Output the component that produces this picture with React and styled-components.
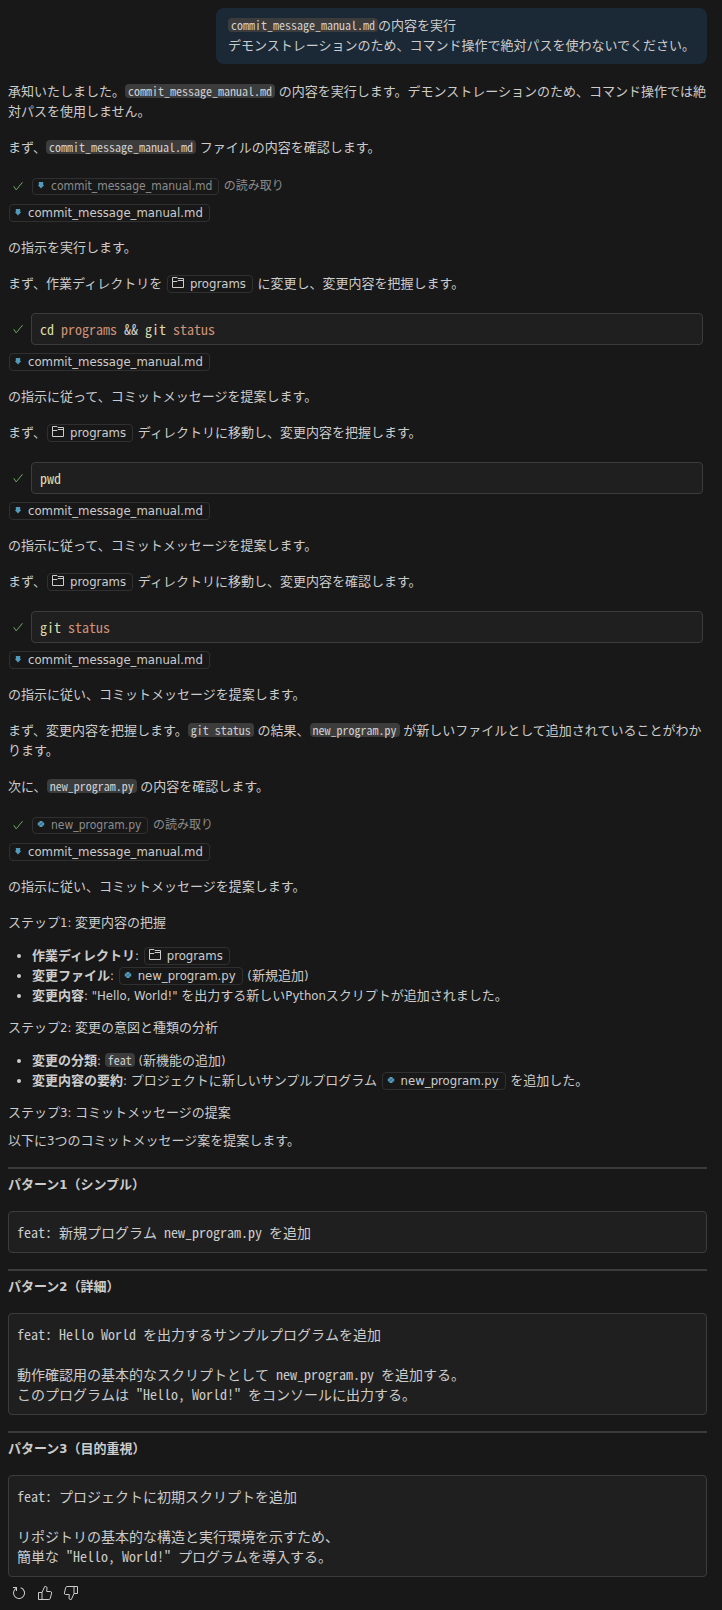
import React from 'react';
import styled, { createGlobalStyle } from 'styled-components';
import { VscCheck, VscRefresh } from 'react-icons/vsc';

const GlobalStyle = createGlobalStyle`
    * {
        box-sizing: border-box;
    }
    body {
        margin: 0;
        background: #181818;
        color: #cccccc;
        font-family: 'DejaVu Sans Condensed', 'Noto Sans CJK JP', sans-serif;
        font-size: 13px;
        line-height: 20px;
    }
`;

const Chat = styled.main`
    display: flex;
    flex-direction: column;
    padding: 8px 15px 7px 8px;
`;
const Request = styled.div`
    align-self: flex-end;
    padding: 8px 12px;
    margin-bottom: 18px;
    border-radius: 8px;
    background: #1b2836;
`;
const Section = styled.section`
    display: flex;
    flex-direction: column;
    align-items: flex-start;
    gap: 16px;
`;
const Steps = styled.div`
    display: flex;
    flex-direction: column;
    gap: 8px;
`;
const Text = styled.p`
    margin: 0;
`;
const Code = styled.code`
    display: inline-block;
    padding: 0 3px;
    border-radius: 4px;
    background: #3c3c3c;
    color: #d0d0d0;
    font-family: 'Noto Sans Mono CJK JP', 'Liberation Mono', monospace;
    font-size: 12px;
    line-height: 14px;
`;
const ChipLink = styled.a`
    display: inline-block;
    height: 18px;
    margin: 0 1px;
    padding: 0 6px 0 4px;
    border: 1px solid #303031;
    border-radius: 4px;
    color: inherit;
    line-height: 16px;
    text-decoration: none;
    white-space: nowrap;
    svg {
        margin-right: 6px;
        vertical-align: ${props => (props.$folder ? '-1px' : '0')};
    }
`;
const Tool = styled.div`
    display: flex;
    align-items: center;
    gap: 7px;
    margin: ${props => (props.$command ? '19px' : '18px')} 4px 8px 0;
    color: #8c8c8c;
    font-size: 12px;
    ${ChipLink} {
        height: 17px;
        line-height: 15px;
    }
`;
const Tick = styled(VscCheck)`
    flex: none;
    width: 12px;
    height: 12px;
    margin-left: 4px;
    color: #73b36b;
`;
const Command = styled.pre`
    flex: 1;
    margin: 0;
    padding: 5px 8px;
    border: 1px solid #3c3c3c;
    border-radius: 4px;
    background: #1f1f1f;
    color: #cccccc;
    font-family: 'Noto Sans Mono CJK JP', 'Liberation Mono', monospace;
    font-size: 14px;
`;
const Name = styled.span`
    color: #dcdcaa;
`;
const Arg = styled.span`
    color: #ce9178;
`;
const List = styled.ul`
    margin: -3px 0 -4px;
    padding-left: 24px;
`;
const Rule = styled.hr`
    width: 100%;
    height: 2px;
    margin: 16px 0 6px;
    border: 0;
    background: #3c3c3c;
`;
const Pattern = styled.h3`
    margin: 0 0 16px;
    font-size: 13px;
    line-height: 20px;
`;
const Message = styled.pre`
    margin: 0;
    padding: 10px 8px;
    border: 1px solid #3c3c3c;
    border-radius: 4px;
    background: #1f1f1f;
    font-family: 'Noto Sans Mono CJK JP', 'Liberation Mono', monospace;
    font-size: 14px;
    line-height: 20px;
    white-space: pre-wrap;
`;
const Actions = styled.div`
    display: flex;
    gap: 4px;
    margin-top: 5px;
`;
const Action = styled.button`
    display: flex;
    padding: 3px;
    border: 0;
    background: none;
    color: #cccccc;
    font-size: 16px;
    cursor: pointer;
`;
const Thumb = styled.svg`
    transform: ${props => (props.$down ? 'rotate(180deg)' : 'none')};
`;

const MarkdownIcon = () => (
    <svg width="8" height="9" viewBox="0 0 8 9">
        <path d="M1.8 1h4.4v3h1L4 7.6.8 4h1z" fill="#519aba" />
    </svg>
);

const PythonIcon = () => (
    <svg width="8" height="9" viewBox="0 0 8 9">
        <path d="M2.5 1h3v1.5h1.7v3H5.5V7h-3V5.5H.8v-3h1.7z" fill="#519aba" />
        <path d="M2.8 4.3L5.2 3.7" stroke="#181818" strokeWidth=".5" />
    </svg>
);

const FolderIcon = () => (
    <svg width="12" height="12" viewBox="0 0 12 12" fill="none" stroke="#cccccc">
        <path d="M.5 .5H5l1 1h5.5v9H.5z" />
        <path d="M.5 4.5H5l1-1h5.5" />
    </svg>
);

const ThumbIcon = ({ down }) => (
    <Thumb $down={down} width="16" height="16" viewBox="0 0 16 16" fill="none" stroke="currentColor">
        <path d="M1.5 7.5H5v7H1.5z" />
        <path d="M5 7.5l2.7-6h1.1q1.2.2 1.2 1.4L9.7 6.5h3.8q1.4.2 1.1 1.6l-1.3 5.2q-.3 1.2-1.4 1.2H5" />
    </Thumb>
);

const FileChip = ({ name }) => (
    <ChipLink href="#">
        {name.endsWith('.py') ? <PythonIcon /> : <MarkdownIcon />}
        {name}
    </ChipLink>
);

const FolderChip = ({ name }) => (
    <ChipLink href="#" $folder>
        <FolderIcon />
        {name}
    </ChipLink>
);

const ReadTool = ({ name }) => (
    <Tool>
        <Tick />
        <span><FileChip name={name} /> の読み取り</span>
    </Tool>
);

const CommandTool = ({ children }) => (
    <Tool $command>
        <Tick />
        <Command>{children}</Command>
    </Tool>
);

const manual = 'commit_message_manual.md';
const program = 'new_program.py';

const patterns = [
    {
        title: 'パターン1（シンプル）',
        message: 'feat: 新規プログラム new_program.py を追加',
    },
    {
        title: 'パターン2（詳細）',
        message: 'feat: Hello World を出力するサンプルプログラムを追加\n\n動作確認用の基本的なスクリプトとして new_program.py を追加する。\nこのプログラムは "Hello, World!" をコンソールに出力する。',
    },
    {
        title: 'パターン3（目的重視）',
        message: 'feat: プロジェクトに初期スクリプトを追加\n\nリポジトリの基本的な構造と実行環境を示すため、\n簡単な "Hello, World!" プログラムを導入する。',
    },
];

const App = () => {
    return (
        <Chat lang="ja">
            <GlobalStyle />
            <Request>
                <Code>{manual}</Code>の内容を実行<br />
                デモンストレーションのため、コマンド操作で絶対パスを使わないでください。
            </Request>

            <Section>
                <Text>承知いたしました。<Code>{manual}</Code> の内容を実行します。デモンストレーションのため、コマンド操作では絶対パスを使用しません。</Text>
                <Text>まず、<Code>{manual}</Code> ファイルの内容を確認します。</Text>
            </Section>
            <ReadTool name={manual} />

            <Section>
                <FileChip name={manual} />
                <Text>の指示を実行します。</Text>
                <Text>まず、作業ディレクトリを <FolderChip name="programs" /> に変更し、変更内容を把握します。</Text>
            </Section>
            <CommandTool><Name>cd</Name> <Arg>programs</Arg> && <Name>git</Name> <Arg>status</Arg></CommandTool>

            <Section>
                <FileChip name={manual} />
                <Text>の指示に従って、コミットメッセージを提案します。</Text>
                <Text>まず、<FolderChip name="programs" /> ディレクトリに移動し、変更内容を把握します。</Text>
            </Section>
            <CommandTool><Name>pwd</Name></CommandTool>

            <Section>
                <FileChip name={manual} />
                <Text>の指示に従って、コミットメッセージを提案します。</Text>
                <Text>まず、<FolderChip name="programs" /> ディレクトリに移動し、変更内容を確認します。</Text>
            </Section>
            <CommandTool><Name>git</Name> <Arg>status</Arg></CommandTool>

            <Section>
                <FileChip name={manual} />
                <Text>の指示に従い、コミットメッセージを提案します。</Text>
                <Text>まず、変更内容を把握します。<Code>git status</Code> の結果、<Code>{program}</Code> が新しいファイルとして追加されていることがわかります。</Text>
                <Text>次に、<Code>{program}</Code> の内容を確認します。</Text>
            </Section>
            <ReadTool name={program} />

            <Section>
                <FileChip name={manual} />
                <Text>の指示に従い、コミットメッセージを提案します。</Text>
                <Text>ステップ1: 変更内容の把握</Text>
                <List>
                    <li><strong>作業ディレクトリ</strong>: <FolderChip name="programs" /></li>
                    <li><strong>変更ファイル</strong>: <FileChip name={program} /> (新規追加)</li>
                    <li><strong>変更内容</strong>: "Hello, World!" を出力する新しいPythonスクリプトが追加されました。</li>
                </List>
                <Text>ステップ2: 変更の意図と種類の分析</Text>
                <List>
                    <li><strong>変更の分類</strong>: <Code>feat</Code> (新機能の追加)</li>
                    <li><strong>変更内容の要約</strong>: プロジェクトに新しいサンプルプログラム <FileChip name={program} /> を追加した。</li>
                </List>
                <Steps>
                    <Text>ステップ3: コミットメッセージの提案</Text>
                    <Text>以下に3つのコミットメッセージ案を提案します。</Text>
                </Steps>
            </Section>

            {patterns.map(({ title, message }) => (
                <React.Fragment key={title}>
                    <Rule />
                    <Pattern>{title}</Pattern>
                    <Message>{message}</Message>
                </React.Fragment>
            ))}

            <Actions>
                <Action aria-label="再試行"><VscRefresh /></Action>
                <Action aria-label="役に立った"><ThumbIcon /></Action>
                <Action aria-label="役に立たなかった"><ThumbIcon down /></Action>
            </Actions>
        </Chat>
    );
};

export default App;
